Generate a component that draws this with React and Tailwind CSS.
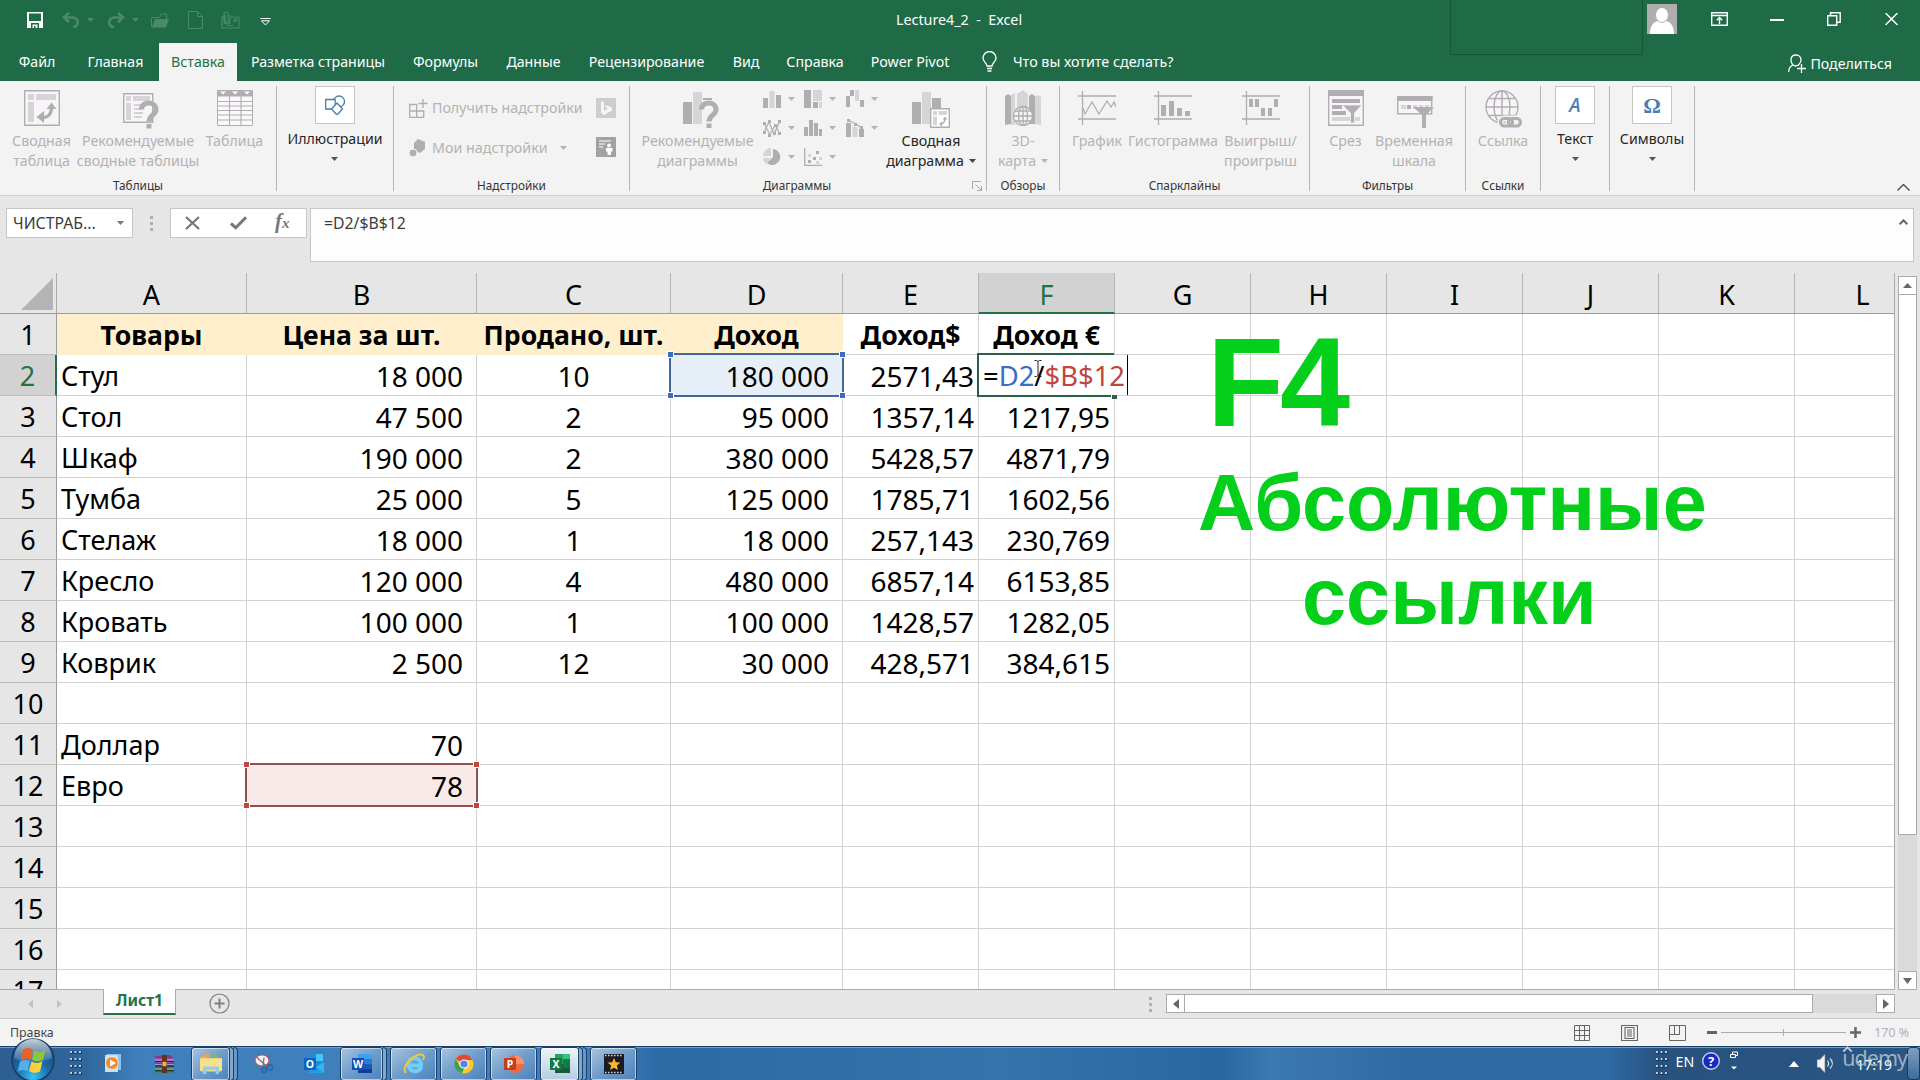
import React from "react";

const Caret = ({ className = "text-[#b5b5b5]" }) => (
  <svg className={`h-1 w-[7px] shrink-0 ${className}`} viewBox="0 0 7 4"><path d="M0 0h7L3.5 4z" fill="currentColor" /></svg>
);

/* ---------- Title bar ---------- */

function QuickAccess() {
  return (
    <div className="flex h-10 items-center text-[#4a8a6b]">
      <svg className="ml-[27px] h-4 w-4" viewBox="0 0 16 16">
        <path d="M0 0h16v16H0z" fill="#fff" /><path d="M2 1.5h12v7.5H2zM4 11h8v5H4z" fill="#1f6b47" /><path d="M5.5 12.5h5V16h-2v-2h-1.500v2h-1.500z" fill="#fff" />
      </svg>
      <svg className="ml-[19px] h-4 w-[18px]" viewBox="0 0 18 16" fill="none" stroke="currentColor" strokeWidth="2.600">
        <path d="M2 5.500h8c5 0 7 4 5 7.500-.6 1-2 2-4 2" /><path d="M7 .8L2 5.500l5 4.700" />
      </svg>
      <Caret className="ml-[7px] text-[#4a8a6b]" />
      <svg className="ml-[13px] h-4 w-[18px]" viewBox="0 0 18 16" fill="none" stroke="currentColor" strokeWidth="2.600">
        <path d="M16 5.500H8C3 5.500 1 9.500 3 13c.6 1 2 2 4 2" /><path d="M11 .8l5 4.700-5 4.700" />
      </svg>
      <Caret className="ml-[7px] text-[#4a8a6b]" />
      <svg className="ml-3 h-[15px] w-[18px]" viewBox="0 0 18 15">
        <path d="M.5 14V4.500h8l2-3.500h5v5" fill="none" stroke="currentColor" /><path d="M1 14.500L4 6h14l-3 8.500z" fill="currentColor" />
      </svg>
      <svg className="ml-[19px] h-[18px] w-[15px]" viewBox="0 0 15 18" fill="none" stroke="currentColor"><path d="M.5.500h9l5 5v12H.500zM9.500.500v5h5" /></svg>
      <svg className="ml-[18px] h-[18px] w-[19px]" viewBox="0 0 19 18" fill="none" stroke="currentColor" strokeWidth="1.200">
        <path d="M4 6H1v11h17V6h-8M4 4v6a1.500 1.500 0 003 0V3a2 2 0 00-4 0v7a3 3 0 006 0V4M6 14.500h6M12 10h3" /><path d="M13.500 8h2v2h-2z" />
      </svg>
      <svg className="mt-[3px] ml-[20px] h-[8px] w-[11px]" viewBox="0 0 11 8" fill="none" stroke="#fff"><path d="M.5.500h10M1.500 2.800h8l-4 4.200z" /></svg>
    </div>
  );
}

function TitleBar() {
  return (
    <div className="relative flex h-[43px] justify-between">
      <QuickAccess />
      <div className="flex h-10 items-start">
        <svg className="mt-1 mr-[34px] h-[30px] w-[30px]" viewBox="0 0 30 30">
          <path d="M0 0h30v30H0z" fill="#aeaeae" /><ellipse cx="15" cy="11" rx="6" ry="7" fill="#fff" /><path d="M3 30c0-8 3-12 8-13 2 2.500 6 2.500 8 0 5 1 8 5 8 13z" fill="#fff" />
        </svg>
        <svg className="mt-[12px] mr-[42px] h-[14px] w-[17px]" viewBox="0 0 17 14" fill="none" stroke="#fff" strokeWidth="1.400"><path d="M.7.700h15.600v12.600H.700zM.700 3.500h15.600M8.500 12V6M5.800 8.300l2.700-2.700 2.700 2.700" /></svg>
        <div className="mt-[19px] mr-[43px] h-[1.500px] w-[14px] bg-white" />
        <svg className="mt-[12px] mr-[44px] h-[14px] w-[14px]" viewBox="0 0 14 14" fill="none" stroke="#fff" strokeWidth="1.400"><path d="M.7 3.700h9v9.500h-9zM3.500 3.500V.800h9.700v9.500H10" /></svg>
        <svg className="mt-[13px] mr-[22px] h-3 w-[13px]" viewBox="0 0 13 12" stroke="#fff" strokeWidth="1.500"><path d="M.5 0l12 12M12.500 0l-12 12" /></svg>
      </div>
      <div className="absolute top-0 left-[1450px] h-[55px] w-[193px] border-x border-b border-[#17543a]" />
      <div className="absolute top-2.5 left-[896px] text-[14.300px] leading-5 whitespace-pre text-white">{"Lecture4_2  -  Excel"}</div>
    </div>
  );
}

function Tabs() {
  const tab = "flex items-center justify-center whitespace-nowrap";
  return (
    <div className="flex h-[38px] text-[14.200px] text-white">
      <div className={`${tab} w-[74px]`}>Файл</div>
      <div className={`${tab} w-[83px]`}>Главная</div>
      <div className={`${tab} ml-[2px] w-[78px] bg-[#f3f3f3] text-[#217346]`}>Вставка</div>
      <div className={`${tab} w-[162px]`}>Разметка страницы</div>
      <div className={`${tab} w-[93px]`}>Формулы</div>
      <div className={`${tab} w-[83px]`}>Данные</div>
      <div className={`${tab} w-[143px]`}>Рецензирование</div>
      <div className={`${tab} ml-px w-[54px]`}>Вид</div>
      <div className={`${tab} w-[84px]`}>Справка</div>
      <div className={`${tab} w-[106px]`}>Power Pivot</div>
      <svg className="mt-[8px] ml-[19px] h-[21px] w-[15px]" viewBox="0 0 15 21" fill="none" stroke="#fff" strokeWidth="1.400">
        <path d="M5 15c0-3-4-4-4-8a6.500 6.500 0 0113 0c0 4-4 5-4 8zM5 17.500h5M5.500 20h4" />
      </svg>
      <div className="flex items-center pl-4 text-[14.300px]">Что вы хотите сделать?</div>
      <div className="mr-[28px] ml-auto flex items-center gap-1 pt-[3px]">
        <svg className="h-[19px] w-[18px]" viewBox="0 0 18 19" fill="none" stroke="#fff" strokeWidth="1.300">
          <path d="M8 1c-3 0-5 2-5 5s2 6 4.500 6S13 9 13 6 11 1 8 1zM.7 18c0-4 1.500-6 4.500-7M10 10.500l1 1M13.500 10v9M9 14.500h9" />
        </svg>
        <span>Поделиться</span>
      </div>
    </div>
  );
}

/* ---------- Ribbon icons ---------- */

const G = "#b0aeb0";
const LG = "#d6d4d6";

const PivotTableIcon = () => (
  <svg className="h-9 w-9" viewBox="0 0 36 36">
    <path d="M.7.700h34.600v34.600H.700z" fill="#f8f5f8" stroke={G} strokeWidth="1.400" /><path d="M4 4h6v6H4zM12 4h20v6H12zM4 12h6v20H4z" fill={LG} />
    <path d="M17 27.500c7 .5 10.500-3 10.500-10" fill="none" stroke={G} strokeWidth="3.200" /><path d="M22.500 19l5-6.500 5 6.500zM20 21v12l-7.500-6z" fill={G} />
  </svg>
);
const RecommendedPivotIcon = () => (
  <svg className="mt-[3px] ml-[6px] h-9 w-9" viewBox="0 0 36 36">
    <path d="M.7.700h29v28.600h-29z" fill="#f8f5f8" stroke={G} strokeWidth="1.400" /><path d="M3 3h5v5H3zM10 3h17v5H10zM3 10h5v17H3z" fill={LG} />
    <path d="M11 12h9M11 16h7M11 20h9M11 24h8" stroke={G} />
    <path d="M18.500 16.500c0-9 14.500-8.500 14.500 0 0 5.500-7 6-7 12" fill="none" stroke={G} strokeWidth="5" /><path d="M23.500 31h5v4.500h-5z" fill={G} />
  </svg>
);
const TableIcon = () => (
  <svg className="h-9 w-9" viewBox="0 0 36 36">
    <path d="M.5.500h35v35H.500z" fill="#fbf8fb" stroke={G} /><path d="M0 0h36v6.500H0z" fill={G} />
    <path d="M12.500 6v29.500M24 6v29.500M0 11.500h36M0 16h36M0 20.500h36M0 25h36M0 30h36" stroke={G} strokeWidth="1.100" />
    <path d="M3 1.500h6L6 4.500zM15 1.500h6l-3 3zM27 1.500h6l-3 3z" fill="#fff" />
  </svg>
);
const RecommendedChartIcon = () => (
  <svg className="mt-[2px] ml-[6px] h-9 w-9" viewBox="0 0 36 36">
    <path d="M0 10h9v22H0z" fill={G} /><path d="M10 0h9v32h-9z" fill={LG} /><path d="M20 6h9v2h-9z" fill={G} />
    <path d="M18.500 17.500c0-9 14.500-8.500 14.500 0 0 5.500-7 6-7 12" fill="none" stroke={G} strokeWidth="5" /><path d="M23.500 31.500h5V36h-5z" fill={G} />
  </svg>
);
const PivotChartIcon = () => (
  <svg className="mt-[2px] h-9 w-[38px]" viewBox="0 0 38 36">
    <path d="M0 10h9v22H0zM20 6h9v11h-9z" fill={G} /><path d="M10 0h9v32h-9z" fill={LG} />
    <path d="M18.700 16.700h18.600v18.600H18.700z" fill="#fff" stroke={G} strokeWidth="1.400" /><path d="M21 19h4v4h-4zM26.500 19H35v4h-8.500zM21 24.500h4V33h-4z" fill={LG} />
    <path d="M28 32c4 0 5-2 5-6" fill="none" stroke={G} strokeWidth="1.500" /><path d="M30.500 27.500l2.500-3 2.500 3zM30 29.500v5l-3-2.500z" fill={G} />
  </svg>
);
const MapIcon = () => (
  <svg className="h-9 w-9" viewBox="0 0 36 36">
    <path d="M0 6l3-2 3 2v28l-6 1z" fill={G} /><path d="M6 5l4-2v32H6zM12 4l6-4 5 4v18H12z" fill={LG} /><path d="M24 6l3-2 3 2v28h-6z" fill={G} /><path d="M30 7l3-2 3 2v28l-6-1z" fill={LG} />
    <g fill="#f5f3f5" stroke={G} strokeWidth="1.300"><circle cx="18" cy="26" r="9.500" /><ellipse cx="18" cy="26" rx="4.500" ry="9.500" /><path d="M8.500 26h19M10 21h16M10 31h16M18 16.500v19" /></g>
  </svg>
);
const spark = "M0 5h38M0 28h38M4.500 0v34";
const LineSparkIcon = () => (
  <svg className="mt-px h-[34px] w-[38px]" viewBox="0 0 38 34" fill="none" stroke={G} strokeWidth="1.300"><path d={spark} /><path d="M5 17l2 6 7-12 7 12 8-13 4 6 3-5 2 5" /></svg>
);
const ColumnSparkIcon = () => (
  <svg className="mt-px h-[34px] w-[38px]" viewBox="0 0 38 34"><path d={spark} fill="none" stroke={G} strokeWidth="1.300" /><path d="M7 14h5v11H7zM15 10h5v15h-5zM23 17h5v8h-5zM31 20h5v5h-5z" fill={G} /></svg>
);
const WinLossIcon = () => (
  <svg className="mt-px h-[34px] w-[38px]" viewBox="0 0 38 34"><path d={spark} fill="none" stroke={G} strokeWidth="1.300" /><path d="M7 8h4v8H7zM13 8h4v8h-4zM19 17h4v8h-4zM26 17h4v8h-4zM32 8h4v8h-4z" fill={G} /></svg>
);
const SlicerIcon = () => (
  <svg className="h-9 w-9" viewBox="0 0 36 36">
    <path d="M.7.700h34.600v34.600H.700z" fill="#f8f5f8" stroke={G} strokeWidth="1.400" /><path d="M0 0h36v6H0zM4 9h28v4H4zM4 15h10v4H4zM4 21h14v4H4z" fill={G} /><path d="M4 27h28v4H4z" fill={LG} />
    <path d="M14 15h20l-7.500 8v10h-4V23z" fill={G} stroke="#f3f3f3" strokeWidth=".8" />
  </svg>
);
const TimelineIcon = () => (
  <svg className="mt-[6px] ml-[3px] h-8 w-[38px]" viewBox="0 0 38 32">
    <path d="M.7.700h34v17H.700z" fill="#f8f5f8" stroke={G} strokeWidth="1.400" /><path d="M0 0h35.500v5H0zM10 9h4v4h-4z" fill={G} /><path d="M4 9h5v4H4zM16 9h4v4h-4zM22 9h4v4h-4zM28 9h4v4h-4z" fill={LG} />
    <path d="M16 11h21l-8 8v13h-4V19z" fill={G} />
  </svg>
);
const LinkIcon = () => (
  <svg className="ml-[2px] h-[38px] w-[38px]" viewBox="0 0 38 38">
    <g fill="none" stroke={G} strokeWidth="1.400"><circle cx="17" cy="17" r="16" fill="#f8f5f8" /><ellipse cx="17" cy="17" rx="8" ry="16" /><path d="M1 17h32M4 8.500h26M4 25.500h26M17 1v32" /></g>
    <g fill="none" stroke="#f3f3f3" strokeWidth="6"><rect x="15.500" y="28.500" width="12" height="7.500" rx="3.700" /><rect x="23.500" y="28.500" width="12" height="7.500" rx="3.700" /></g>
    <g fill="none" stroke={G} strokeWidth="3.200"><rect x="15.500" y="28.500" width="12" height="7.500" rx="3.700" /><rect x="23.500" y="28.500" width="12" height="7.500" rx="3.700" /></g>
  </svg>
);

const miniCharts = [
  <><path d="M0 8h5v10H0zM13 5h5v13h-5z" fill={G} /><path d="M6.500 1h5v17h-5z" fill={LG} /></>,
  <><path d="M0 0h7v18H0zM9 12h5v6H9z" fill={G} /><path d="M9 0h9v11H9zM15 12h3v6h-3z" fill={LG} /></>,
  <><path d="M0 6h4v11H0zM4 0h4v6H4zM14 10h4v7h-4z" fill={G} /><path d="M9 0h4v11H9z" fill={LG} /></>,
  <><path d="M1 13L6 3l5 12 6-13M1 4l6 12 5-10 5 9" fill="none" stroke={G} strokeWidth="1.200" /><path d="M0 12h3v3H0zM5 1h3v3H5zM10 13h3v3h-3zM15 1h3v3h-3zM0 3h3v3H0zM5 15h3v3H5zM11 5h3v3h-3zM15 13h3v3h-3z" fill={G} /></>,
  <path d="M0 8h4v9H0zM5 1h4v16H5zM10 4h4v13h-4zM15 10h3v7h-3z" fill={G} />,
  <><path d="M0 4h5v14H0zM13 10h5v8h-5z" fill={G} /><path d="M6.500 8h5v10h-5z" fill={LG} /><path d="M2 1l8 4 6 4" fill="none" stroke={G} strokeWidth="1.200" /><path d="M1 0h3v3H1zM8 4h3v3H8zM14 7h3v3h-3z" fill={G} /></>,
  <><path d="M10 9V1a8 8 0 11-6 14z" fill={G} /><path d="M8 8V0a8 8 0 00-8 8zM8 10H0a8 8 0 003 6z" fill={LG} /></>,
  <><path d="M.7 0v17.300H18" fill="none" stroke={G} strokeWidth="1.300" /><path d="M4 12h3v3H4zM9 9h3v3H9zM12 3h3v3h-3z" fill={G} /><path d="M4 6h3v3H4zM15 9h3v3h-3zM12 13h3v3h-3z" fill={LG} /></>,
];

/* ---------- Ribbon ---------- */

function Group({ width, label, children, launcher }) {
  return (
    <div className={`relative flex h-[105px] shrink-0 flex-col border-r border-[#b5b5b5] ${width}`}>
      <div className="flex h-[91px] shrink-0 justify-center">{children}</div>
      <div className="text-center text-[11.800px] leading-4 text-[#333]">{label}</div>
      {launcher && (
        <svg className="absolute right-1 bottom-0 h-[10px] w-[10px]" viewBox="0 0 10 10" fill="none" stroke="#a9a9a9"><path d="M.5 8V.500H9M3.500 3.500l6 6M9.500 5v4.500H5" /></svg>
      )}
    </div>
  );
}

function BigButton({ width, icon, lines, caret, dark }) {
  return (
    <div className={`flex shrink-0 flex-col items-center pt-1 whitespace-nowrap ${width} ${dark ? "text-[#262626]" : "text-[#b4b2b4]"}`}>
      <div className="flex h-[41px] items-start">{icon}</div>
      {lines.map((l, i) => (
        <div key={l} className="flex h-5 items-center gap-[5px] text-[14.200px] leading-5">
          {l}
          {caret && i === lines.length - 1 && <Caret className={dark ? "text-[#444]" : "text-[#b5b5b5]"} />}
        </div>
      ))}
    </div>
  );
}

function CollapsedGroup({ width, icon, label }) {
  return (
    <Group width={width} label="">
      <div className="flex flex-col items-center text-[14.200px] text-[#262626]">
        <div className="flex h-[38px] w-10 items-center justify-center border border-[#c6c6c6] bg-white">{icon}</div>
        <div className="mt-[5px] leading-5">{label}</div>
        <Caret className="mt-2 text-[#555]" />
      </div>
    </Group>
  );
}

function Ribbon() {
  return (
    <div className="flex h-[115px] border-b border-[#d0d0d0] bg-[#f3f3f3] pt-[5px]">
      <Group width="w-[277px]" label="Таблицы">
        <BigButton width="w-[68px]" icon={<PivotTableIcon />} lines={["Сводная", "таблица"]} />
        <BigButton width="w-[125px]" icon={<RecommendedPivotIcon />} lines={["Рекомендуемые", "сводные таблицы"]} />
        <BigButton width="w-[68px]" icon={<TableIcon />} lines={["Таблица"]} />
      </Group>
      <CollapsedGroup width="w-[117px]" label="Иллюстрации" icon={
        <svg className="h-5 w-5" viewBox="0 0 20 20" fill="#fff" stroke="#4a7ea5" strokeWidth="1.300"><circle cx="14" cy="6.500" r="5.500" /><path d="M.7 4.500h9.500v9.500H.700z" /><path d="M12 8l5.500 6-5.500 6-5.500-6z" /></svg>
      } />
      <Group width="w-[236px]" label="Надстройки">
        <div className="flex w-full flex-col gap-[20px] pt-3 pr-[13px] pl-[15px] text-[14.200px] leading-5 text-[#b4b2b4]">
          <div className="flex h-5 items-center">
            <svg className="h-[19px] w-[19px]" viewBox="0 0 19 19" fill="none" stroke={G} strokeWidth="1.300"><path d="M.7 5.500h7v13h-7zM.7 12h14v6.500h-14M14.700 18.500V12M7.700 5.500V18.500M14 0v9M9.500 4.500h9" /></svg>
            <span className="ml-1">Получить надстройки</span>
            <svg className="ml-auto h-5 w-5" viewBox="0 0 20 20"><path d="M0 0h20v20H0z" fill="#cfccd0" /><path d="M5 3l3 1v9l4-2.500-2-1L9 7l7 2.500v3L8 17l-3-2z" fill="#f8f5f8" /></svg>
          </div>
          <div className="flex h-5 items-center">
            <svg className="h-[18px] w-[18px]" viewBox="0 0 18 18"><path d="M9 0l7 3v7l-5 4-6-3V4z" fill={G} /><circle cx="4" cy="14" r="4" fill={G} stroke="#f3f3f3" /></svg>
            <span className="ml-[5px] text-[14.300px]">Мои надстройки</span>
            <Caret className="ml-[12px]" />
            <svg className="mb-[2px] ml-auto h-5 w-5" viewBox="0 0 20 20"><path d="M0 0h20v20H0z" fill="#a3a1a3" /><path d="M3 4h12M3 7h6M3 10h4" stroke="#e4e2e4" strokeWidth="1.300" /><circle cx="13" cy="8.500" r="1.900" fill="#fff" /><path d="M10 11h6.500v3.500H15V18h-3.500v-3.500H10z" fill="#fff" /></svg>
          </div>
        </div>
      </Group>
      <Group width="w-[357px]" label={<span className="pr-[22px]">Диаграммы</span>} launcher>
        <BigButton width="w-[133px]" icon={<RecommendedChartIcon />} lines={["Рекомендуемые", "диаграммы"]} />
        <div className="-ml-px grid h-[87px] w-[124px] grid-cols-3 grid-rows-3">
          {miniCharts.map((c, i) => (
            <div key={i} className="-mt-[3px] flex items-center gap-[7px]"><svg className="h-[18px] w-[18px]" viewBox="0 0 18 18">{c}</svg><Caret /></div>
          ))}
        </div>
        <BigButton width="w-[88px]" icon={<PivotChartIcon />} lines={["Сводная", "диаграмма"]} caret dark />
        <div className="w-2.5" />
      </Group>
      <Group width="w-[73px]" label="Обзоры">
        <BigButton width="w-[72px]" icon={<MapIcon />} lines={["3D-", "карта"]} caret />
      </Group>
      <Group width="w-[250px]" label="Спарклайны">
        <BigButton width="w-[60px]" icon={<LineSparkIcon />} lines={["График"]} />
        <BigButton width="w-[92px]" icon={<ColumnSparkIcon />} lines={["Гистограмма"]} />
        <BigButton width="w-[83px]" icon={<WinLossIcon />} lines={["Выигрыш/", "проигрыш"]} />
      </Group>
      <Group width="w-[156px]" label="Фильтры">
        <div className="w-[3px]" />
        <BigButton width="w-[50px]" icon={<SlicerIcon />} lines={["Срез"]} />
        <BigButton width="w-[87px]" icon={<TimelineIcon />} lines={["Временная", "шкала"]} />
      </Group>
      <Group width="w-[75px]" label="Ссылки">
        <BigButton width="w-[72px]" icon={<LinkIcon />} lines={["Ссылка"]} />
      </Group>
      <CollapsedGroup width="w-[69px]" label="Текст" icon={<span className="font-['Open_Sans'] text-[19px] font-semibold text-[#4a7fb5] italic">А</span>} />
      <CollapsedGroup width="w-[85px]" label="Символы" icon={<span className="font-['Liberation_Serif'] text-[22px] font-bold text-[#4a7fb5]">Ω</span>} />
      <svg className="mt-auto mr-[10px] mb-1 ml-auto h-[7px] w-[13px]" viewBox="0 0 13 7" fill="none" stroke="#444" strokeWidth="1.300"><path d="M.5 6.500l6-6 6 6" /></svg>
    </div>
  );
}

/* ---------- Formula bar ---------- */

const Dots = ({ className }) => (
  <div className={`flex flex-col gap-[3px] ${className}`}>
    <i className="h-[3px] w-[3px] bg-[#b0b0b0]" /><i className="h-[3px] w-[3px] bg-[#b0b0b0]" /><i className="h-[3px] w-[3px] bg-[#b0b0b0]" />
  </div>
);

function FormulaBar() {
  return (
    <div className="flex h-[78px] items-start bg-[#e6e6e6] pt-3 pl-[6px] text-[15.800px] text-[#3c3c3c]">
      <div className="flex h-[30px] w-[127px] items-center justify-between border border-[#c6c6c6] bg-white pr-2 pl-1.5"><span className="pt-0.5">ЧИСТРАБ...</span><Caret className="text-[#777]" /></div>
      <Dots className="mt-2 ml-[17px]" />
      <div className="ml-[17px] flex h-[30px] w-[137px] items-center border border-[#c6c6c6] bg-white pl-[14px]">
        <svg className="h-[14px] w-[15px]" viewBox="0 0 15 14" stroke="#777" strokeWidth="2.200"><path d="M1 1l13 12M14 1L1 13" /></svg>
        <svg className="ml-[30px] h-[14px] w-[17px]" viewBox="0 0 18 14" fill="none" stroke="#777" strokeWidth="3.200"><path d="M1 7.500l5 4.500L17 1" /></svg>
        <span className="mb-0.5 ml-[28px] font-['Liberation_Serif'] text-[21px] leading-none font-bold text-[#777] italic">f<span className="text-[15px]">x</span></span>
      </div>
      <div className="ml-[3px] flex h-[54px] w-[1604px] items-start justify-between border border-[#c6c6c6] bg-[#fdfdfe] pt-[2px] pr-[5px] pl-[13px]">
        <span className="leading-6">=D2/$B$12</span>
        <svg className="mt-[8px] h-[6px] w-[9px]" viewBox="0 0 9 6" fill="none" stroke="#666" strokeWidth="2"><path d="M.7 5.300l3.800-4 3.800 4" /></svg>
      </div>
    </div>
  );
}

/* ---------- Sheet ---------- */

const COLS = [
  ["A", "w-[190px]"], ["B", "w-[230px]"], ["C", "w-[194px]"], ["D", "w-[172px]"], ["E", "w-[136px]"], ["F", "w-[136px]"],
  ["G", "w-[136px]"], ["H", "w-[136px]"], ["I", "w-[136px]"], ["J", "w-[136px]"], ["K", "w-[136px]"], ["L", "w-[136px]"],
];
const ROWS = [
  ["Товары", "Цена за шт.", "Продано, шт.", "Доход", "Доход$", "Доход €"],
  ["Стул", "18 000", "10", "180 000", "2571,43", ""],
  ["Стол", "47 500", "2", "95 000", "1357,14", "1217,95"],
  ["Шкаф", "190 000", "2", "380 000", "5428,57", "4871,79"],
  ["Тумба", "25 000", "5", "125 000", "1785,71", "1602,56"],
  ["Стелаж", "18 000", "1", "18 000", "257,143", "230,769"],
  ["Кресло", "120 000", "4", "480 000", "6857,14", "6153,85"],
  ["Кровать", "100 000", "1", "100 000", "1428,57", "1282,05"],
  ["Коврик", "2 500", "12", "30 000", "428,571", "384,615"],
  [], ["Доллар", "70"], ["Евро", "78"], [], [], [], [], [],
];
const ALIGN = ["pl-1 text-[27px]", "justify-end pr-[13px]", "justify-center", "justify-end pr-[13px]", "justify-end pr-1", "justify-end pr-1"];

function RangeMark({ box, handle }) {
  return (
    <div className={`absolute -top-[2px] -right-[2px] -bottom-[2px] -left-[2px] z-10 border-2 ${box}`}>
      <i className={`absolute -top-1 -left-1 h-[7px] w-[7px] border border-white ${handle}`} />
      <i className={`absolute -top-1 -right-1 h-[7px] w-[7px] border border-white ${handle}`} />
      <i className={`absolute -bottom-1 -left-1 h-[7px] w-[7px] border border-white ${handle}`} />
      <i className={`absolute -right-1 -bottom-1 h-[7px] w-[7px] border border-white ${handle}`} />
    </div>
  );
}

function EditCell() {
  return (
    <div className="absolute -top-[2px] -left-[2px] z-10 h-[44px] w-[137px]">
      <div className="absolute top-[2px] left-[2px] flex h-[40px] w-[149px] items-center border-r border-black bg-white pt-px pl-1 text-[27.400px] whitespace-nowrap">
        =<span className="text-[#3b6cc2]">D2</span>/<span className="text-[#c0453d]">$B$12</span>
      </div>
      <div className="absolute inset-0 border-y-2 border-l-2 border-[#2c5f49]" />
      <i className="absolute right-[-3px] bottom-[-2px] h-[5px] w-[6px] border-t border-l border-white bg-[#2c5f49]" />
      <svg className="absolute top-[7px] left-[57px] h-[17px] w-[8px]" viewBox="0 0 8 17" fill="none" stroke="#222"><path d="M.5.500h2l1.500 1 1.500-1h2M4 1.500v14M.5 16.500h2l1.500-1 1.500 1h2" /></svg>
    </div>
  );
}

function Cell({ row, col, value }) {
  const header = row === 0;
  const filled = header && col < 4;
  return (
    <div className={`relative flex h-[41px] shrink-0 items-center border-r border-b whitespace-nowrap ${COLS[col][1]} ${filled ? "border-[#ffefcd] bg-[#ffefcd]" : "border-[#d2d2d2]"} ${header ? "justify-center pt-0.5 text-[26.600px] font-bold" : ALIGN[col] || ""}`}>
      {row === 1 && col === 3 && <RangeMark box="border-[#42679b] bg-[#e6eef8]" handle="bg-[#3b6cc2]" />}
      {row === 11 && col === 1 && <RangeMark box="border-[#94504e] bg-[#f9eae9]" handle="bg-[#c0453d]" />}
      {row === 1 && col === 5 && <EditCell />}
      <span className="relative z-10 pt-px">{value}</span>
    </div>
  );
}

function Overlay() {
  return (
    <div className="absolute top-[41px] left-[1198px] z-20 font-['Liberation_Sans'] font-bold whitespace-nowrap text-[#04d01b]">
      <div className="absolute top-[6px] left-[9px] text-[126px] leading-[126px] tracking-[-4px]">F4</div>
      <div className="absolute top-[149px] left-0 text-[79.200px] leading-[80px]">Абсолютные</div>
      <div className="absolute top-[243px] left-[104px] text-[79.300px] leading-[80px]">ссылки</div>
    </div>
  );
}

function Sheet() {
  return (
    <div className="flex h-[717px] bg-[#e6e6e6] text-[28px] text-black">
      <div className="relative w-[1895px] overflow-hidden border-r border-b border-[#ababab] bg-white">
        <div className="flex h-[41px] w-max border-b border-[#9b9b9b] bg-[#e6e6e6] text-[27px]">
          <div className="flex w-[57px] items-end justify-end border-r border-[#ababab] pr-[3px] pb-[3px]">
            <svg className="h-8 w-8" viewBox="0 0 32 32"><path d="M32 0v32H0z" fill="#b4b4b6" /></svg>
          </div>
          {COLS.map(([name, w]) => (
            <div key={name} className={`flex items-center justify-center border-r ${w} ${name === "F" ? "h-[41px] border-b-2 border-[#217346] border-r-[#b4b4b4] bg-[#d2d2d3] pt-[5px] text-[#217346]" : "h-[40px] border-[#b4b4b4] pt-1"}`}>{name}</div>
          ))}
        </div>
        {ROWS.map((r, i) => (
          <div key={i} className="flex h-[41px] w-max">
            <div className={`flex w-[57px] shrink-0 items-center justify-center border-b border-b-[#bdbdbd] pt-0.5 text-[27px] ${i === 1 ? "border-r-2 border-r-[#217346] bg-[#d2d2d3] text-[#217346]" : "border-r border-r-[#9b9b9b] bg-[#e6e6e6]"}`}>{i + 1}</div>
            {COLS.map((c, j) => <Cell key={j} row={i} col={j} value={r[j]} />)}
          </div>
        ))}
        <Overlay />
      </div>
      <div className="mt-[3px] ml-[3px] flex w-[19px] flex-col">
        <div className="flex h-[19px] items-center justify-center border border-[#ababab] bg-white"><svg className="h-[5px] w-[9px]" viewBox="0 0 9 5"><path d="M0 5h9L4.500 0z" fill="#666" /></svg></div>
        <div className="-mt-px h-[541px] border border-[#ababab] bg-white" />
        <div className="flex-1 bg-[#dadada]" />
        <div className="flex h-[19px] items-center justify-center border border-[#ababab] bg-white"><svg className="h-[6px] w-[9px]" viewBox="0 0 9 6"><path d="M0 0h9L4.500 6z" fill="#666" /></svg></div>
      </div>
    </div>
  );
}

/* ---------- Bottom bars ---------- */

const Side = ({ left, className }) => <svg className={className} viewBox="0 0 6 10"><path d={left ? "M6 0v10L0 5z" : "M0 0v10l6-5z"} fill="currentColor" /></svg>;

function SheetTabs() {
  return (
    <div className="flex h-[29px] items-start border-b border-[#cbcbcb] bg-[#e6e6e6]">
      <Side left className="mt-[9px] ml-[28px] h-[10px] w-[5px] text-[#c3c3c3]" />
      <Side className="mt-[9px] ml-[24px] h-[10px] w-[5px] text-[#c3c3c3]" />
      <div className="relative -mt-px ml-[41px] flex h-[26px] w-[73px] items-center justify-center border-x border-b-2 border-[#ababab] border-b-[#217346] bg-white pb-px text-[15.700px] font-bold text-[#217346]">Лист1</div>
      <svg className="mt-[3px] ml-[33px] h-[21px] w-[21px]" viewBox="0 0 21 21" fill="none" stroke="#808080"><circle cx="10.500" cy="10.500" r="9.500" strokeWidth="1.200" /><path d="M5.500 10.500h10M10.500 5.500v10" strokeWidth="2" /></svg>
      <Dots className="mt-[7px] ml-auto" />
      <div className="mt-[4px] mr-[25px] ml-[14px] flex h-[19px] w-[729px] bg-[#dadada]">
        <div className="flex w-[19px] items-center justify-center border border-[#ababab] bg-white"><Side left className="h-[10px] w-[6px] text-[#666]" /></div>
        <div className="-ml-px w-[629px] border border-[#ababab] bg-white" />
        <div className="ml-auto flex w-[19px] items-center justify-center border border-[#ababab] bg-white"><Side className="h-[10px] w-[6px] text-[#666]" /></div>
      </div>
    </div>
  );
}

function StatusBar() {
  return (
    <div className="flex h-[27px] items-center bg-[#f3f3f3] pl-[10px] text-[12.400px] text-[#444]">
      <span className="pt-0.5">Правка</span>
      <svg className="ml-auto h-4 w-4" viewBox="0 0 16 16" fill="none" stroke="#666"><path d="M.5.500h15v15H.500zM5.500 0v16M10.500 0v16M0 5.500h16M0 10.500h16" /></svg>
      <svg className="ml-[31px] h-4 w-[17px]" viewBox="0 0 17 16" fill="none" stroke="#666" strokeWidth="1.100"><path d="M.5.500h16v15H.500zM4 2.500h9v11H4zM6 5h5M6 7h5M6 9h5M6 11h5" /></svg>
      <svg className="ml-[31px] h-4 w-[17px]" viewBox="0 0 17 16" fill="none" stroke="#666"><path d="M.5.500h16v15H.500zM.500 9.500h10V.500M5.500.500v9" /></svg>
      <div className="ml-[21px] h-[3px] w-[10px] bg-[#666]" />
      <svg className="ml-1 h-[9px] w-[125px]" viewBox="0 0 125 9" stroke="#adadad"><path d="M0 4.500h125M62.500 1v7" /></svg>
      <svg className="ml-1 h-[11px] w-[11px]" viewBox="0 0 11 11" stroke="#666" strokeWidth="2.500"><path d="M0 5.500h11M5.500 0v11" /></svg>
      <span className="mr-[11px] ml-[13px] pt-0.5 text-[#b0b0b0]">170 %</span>
    </div>
  );
}

const Grip = ({ className }) => (
  <svg className={`h-[25px] w-3 shrink-0 ${className}`} viewBox="0 0 12 25">
    {[0, 7, 14, 21].map((y) => [0, 4.500, 9].map((x) => <g key={`${x}-${y}`}><path d={`M${x} ${y}h3v3h-3z`} fill="#15395f" /><path d={`M${x} ${y}h2v2h-2z`} fill="#b7cde2" /></g>))}
  </svg>
);

const OfficeTile = ({ letter, tile, children }) => (
  <svg className="h-5 w-5" viewBox="0 0 20 20">
    {children}
    <path d="M0 4h12v12H0z" fill={tile} />
    <text x="6" y="13.800" textAnchor="middle" fill="#fff" fontSize="10.500" fontWeight="700" fontFamily="Noto Sans, sans-serif">{letter}</text>
  </svg>
);

function TaskButton({ className, stack = 0, bright, children }) {
  return (
    <div className={`flex h-[34px] shrink-0 ${className}`}>
      <div className={`flex flex-1 items-center justify-center rounded-[3px] border border-[#1c4068] shadow-[inset_0_0_0_1px_rgba(255,255,255,0.55)] ${bright ? "bg-linear-to-b from-[#f0f4f8] to-[#b4cbe2]" : "bg-linear-to-br from-[#a9c4de] via-[#6f9dca] to-[#4b83bc]"}`}>{children}</div>
      {stack > 0 && <div className="w-1 rounded-r border-y border-r border-[#1c4068] bg-[#7fa8d0]" />}
      {stack > 1 && <div className="w-1 rounded-r border-y border-r border-[#1c4068] bg-[#6797c7]" />}
    </div>
  );
}

function Taskbar() {
  return (
    <div className="relative flex h-[34px] items-center border-t border-[#173f68] bg-[linear-gradient(90deg,#2d5f92_0,#2f659b_80px,#3f7fbb_140px,#3f7fbd_600px,#2c6aa6_660px,#3673ad_1000px,#2f6ca7_1130px,#2a66a2_1220px,#3c78b1_1270px,#2f69a3_1420px,#2f69a3_1610px,#27527e_1660px,#2a5684_1920px)] shadow-[inset_0_1px_0_#6f9fce]">
      <svg className="absolute -top-[9px] left-[11px] h-11 w-11" viewBox="0 0 44 44">
        <defs>
          <radialGradient id="orb" cx=".5" cy=".9" r=".9"><stop offset="0" stopColor="#35c3f5" /><stop offset=".45" stopColor="#1b69a8" /><stop offset="1" stopColor="#173f6e" /></radialGradient>
          <linearGradient id="gloss" x2="0" y2="1"><stop offset="0" stopColor="#fff" stopOpacity=".75" /><stop offset="1" stopColor="#fff" stopOpacity=".1" /></linearGradient>
        </defs>
        <circle cx="22" cy="22" r="21" fill="url(#orb)" stroke="#163c63" strokeWidth="1.500" />
        <path d="M3 20a19 19 0 0138 0c-8 5-30 5-38 0z" fill="url(#gloss)" />
        <path d="M12 12c4-3 7-2 10 0l-2.500 10c-3-2-6.500-2-10 0z" fill="#e8622c" /><path d="M23.500 12.500c4 2 7 2 11-.5l-2.500 10c-4 2-8 2-11-.5z" fill="#8cc63e" />
        <path d="M9 23.500c3-2 7-2 10 0l-2.500 10c-3-2-6.500-2-10 0z" fill="#55aee6" /><path d="M20.500 23.500c4 2 7 2 11-.5l-2.500 10.500c-4 2-8 1.500-11-.5z" fill="#fdd03b" />
      </svg>
      <Grip className="ml-[70px]" />
      <svg className="mb-0.5 ml-[23px] h-[18px] w-4" viewBox="0 0 16 18"><path d="M2 0h14v16H2z" fill="#8fc4ea" /><path d="M0 1h13v17H0z" fill="#c6e0f3" /><circle cx="7" cy="9" r="6.300" fill="#f28a2c" stroke="#fff" strokeWidth=".6" /><path d="M5 5.500v7L11 9z" fill="#fff" /></svg>
      <svg className="ml-[33px] h-[18px] w-[21px]" viewBox="0 0 21 16" preserveAspectRatio="none"><path d="M0 1l16-1 4 3H2z" fill="#7b3b93" /><path d="M1 3h19v4H1z" fill="#b34da6" /><path d="M1 7h19v4H1z" fill="#2b57c4" /><path d="M1 11h19v4.500H1z" fill="#2c8b3c" /><path d="M1 5.800h19M1 9.800h19M1 14h19" stroke="#222" strokeWidth=".9" /><path d="M1 4.500h19M1 8.500h19M1 12.500h19" stroke="#d8c8dc" strokeWidth=".6" /><path d="M8 0h5v16H8z" fill="#5e3420" /><path d="M8.500 6h4v4h-4z" fill="#e9b93d" /></svg>
      <TaskButton className="ml-4 w-[47px]" stack={2}>
        <svg className="h-[20px] w-[22px]" viewBox="0 0 21 19"><path d="M1 2h6l2 2h11v13H1z" fill="#e2b94d" /><path d="M4 0h5v3H4z" fill="#e8a05a" /><path d="M12 0h5v4h-5z" fill="#7cb86a" /><path d="M0 4h21v12H0z" fill="#f6e08e" /><path d="M3 19v-7h15v7h-3v-4H6v4z" fill="#8fd0f2" /></svg>
      </TaskButton>
      <svg className="ml-4 h-[20px] w-[20px]" viewBox="0 0 20 19"><ellipse cx="8" cy="6" rx="7" ry="5.500" fill="#f4f4f6" stroke="#c9545a" strokeWidth="1.200" /><path d="M3 3l11 10M10 3l-1 9" stroke="#7a6f78" strokeWidth="1.300" /><circle cx="10" cy="15.500" r="2.300" fill="none" stroke="#2768ad" strokeWidth="1.700" /><circle cx="16" cy="13" r="2.600" fill="none" stroke="#2768ad" strokeWidth="1.700" /></svg>
      <div className="ml-[30px]"><OfficeTile letter="O" tile="#0a66c0"><path d="M6 0h13v12H6z" fill="#1a8fe0" /><path d="M12 0h7v7h-7z" fill="#4fc3f7" /><path d="M5 8l7 5 8-5v11H5z" fill="#1f9fea" /><path d="M20 8v11l-8-6z" fill="#36b4f2" /></OfficeTile></div>
      <TaskButton className="ml-4 w-[47px]" stack={1}><OfficeTile letter="W" tile="#174fb0"><path d="M6 0h14v5H6z" fill="#41a0ee" /><path d="M6 5h14v5H6z" fill="#2b7cd3" /><path d="M6 10h14v5H6z" fill="#185abd" /><path d="M6 15h14v4H6z" fill="#103f91" /></OfficeTile></TaskButton>
      <TaskButton className="ml-[3px] w-[47px]">
        <svg className="h-[22px] w-[22px]" viewBox="0 0 22 22" fill="none"><path d="M18 14.500c-2 5.500-12.500 5-12.500-3 0-9 13-8 12.500 1H7" stroke="#6fd0f8" strokeWidth="4" /><path d="M3 20C-3 14 12-1 20 2c1.500 1 1 3 0 5" stroke="#f3c73a" strokeWidth="2" /></svg>
      </TaskButton>
      <TaskButton className="ml-[3px] w-[47px]">
        <svg className="h-5 w-5" viewBox="0 0 20 20"><circle cx="10" cy="10" r="9.500" fill="#fccb34" /><path d="M10 10L1.800 5A9.500 9.500 0 0118.500 6H10z" fill="#e0483b" /><path d="M1.800 5l4.500 8 4 1L8 19.300A9.500 9.500 0 011.800 5z" fill="#35a353" /><circle cx="10" cy="10" r="4.600" fill="#fff" /><circle cx="10" cy="10" r="3.600" fill="#4a86ec" /></svg>
      </TaskButton>
      <TaskButton className="ml-[3px] w-[47px]"><OfficeTile letter="P" tile="#c43e1c"><circle cx="11" cy="10" r="9" fill="#ed6c47" /><path d="M11 1a9 9 0 019 9h-9z" fill="#ff8f6b" /></OfficeTile></TaskButton>
      <TaskButton className="ml-[3px] w-[47px]" stack={2} bright><OfficeTile letter="X" tile="#107c41"><path d="M5 0h8v10H5z" fill="#21a366" /><path d="M13 0h7v5h-7z" fill="#33c481" /><path d="M13 5h7v9h-7z" fill="#107c41" /><path d="M5 10h8v9H5z" fill="#185c37" /><path d="M13 14h7v5h-7z" fill="#155f38" /></OfficeTile></TaskButton>
      <TaskButton className="ml-[3px] w-[47px]">
        <svg className="h-5 w-5" viewBox="0 0 20 20"><path d="M0 0h20v20H0z" fill="#1c1b22" /><path d="M1 1.500h18M1 18.500h18" stroke="#ddd" strokeWidth="1.500" strokeDasharray="1.500 1.500" /><path d="M10 4l1.800 4.200 4.600.4-3.500 3 1 4.500-3.900-2.400-3.900 2.400 1-4.500-3.500-3 4.600-.4z" fill="#fbb62c" /></svg>
      </TaskButton>
      <Grip className="ml-auto" />
      <span className="mb-1 ml-[8px] text-[14.200px] text-white">EN</span>
      <svg className="mb-1.5 ml-[8px] h-[18px] w-[18px]" viewBox="0 0 18 18"><circle cx="9" cy="9" r="8.300" fill="#1a2bc4" stroke="#c8cde8" strokeWidth="1.400" /><text x="9" y="13.700" textAnchor="middle" fill="#fff" fontSize="13" fontWeight="700" fontFamily="Noto Sans, sans-serif">?</text></svg>
      <svg className="mb-1.5 ml-[10px] h-[19px] w-2" viewBox="0 0 8 19" fill="none" stroke="#fff"><path d="M.5 3.500h5v3h-5zM2.500 3V1h5v3.500H6" /><path d="M1 15.500h6l-3 3z" fill="#fff" stroke="none" /></svg>
      <svg className="ml-[51px] h-[6px] w-[10px]" viewBox="0 0 10 6"><path d="M0 6h10L5 0z" fill="#fff" /></svg>
      <svg className="ml-[18px] h-[19px] w-[18px]" viewBox="0 0 18 19"><path d="M0 5.500h3L8 0v19l-5-5.500H0z" fill="#f4f4f4" stroke="#777" strokeWidth=".6" /><path d="M10.500 6.500c1.500 2 1.500 4 0 6M13 4.500c3 3 3 7 0 10" fill="none" stroke="#dbe6f1" strokeWidth="1.200" /></svg>
      <span className="mr-[15px] ml-[21px] pt-0.5 text-[14px] text-white">17:19</span>
      <div className="h-[33px] w-[13px] rounded-sm border border-[#173a5f] bg-linear-to-b from-[#7f9fc0] to-[#3d6c9d]" />
      <div className="absolute -top-[3px] right-[13px] text-[21.500px] leading-[27px] tracking-[-1px] text-[#d3dae2]/70">udemy
        <svg className="absolute top-[2px] left-0 h-[6px] w-[11px]" viewBox="0 0 12 7" fill="none" stroke="#c4cbd3" strokeWidth="2.200"><path d="M1 6.500l5-5 5 5" /></svg>
      </div>
    </div>
  );
}

export default function App() {
  return (
    <div className="flex h-[1080px] w-[1920px] flex-col overflow-hidden bg-[#e6e6e6] font-['Noto_Sans',sans-serif]">
      <div className="bg-[#1f6b47]"><TitleBar /><Tabs /></div>
      <Ribbon />
      <FormulaBar />
      <Sheet />
      <SheetTabs />
      <StatusBar />
      <Taskbar />
    </div>
  );
}
